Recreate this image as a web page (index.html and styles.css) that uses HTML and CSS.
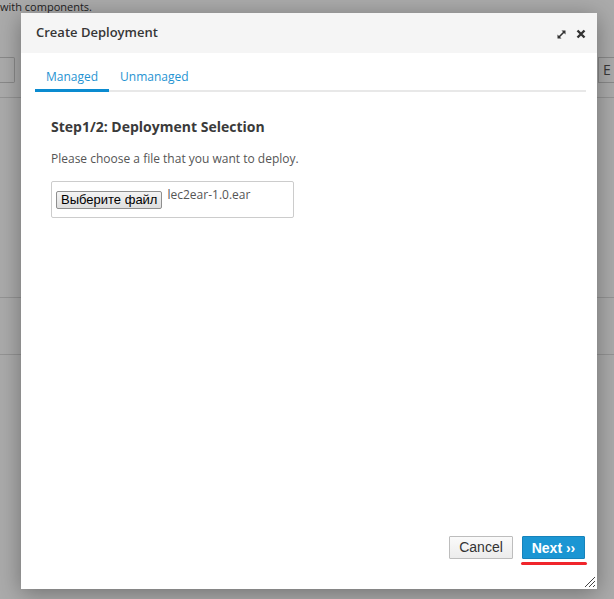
FILE: index.html
```html
<!DOCTYPE html>
<html>
<head>
<meta charset="utf-8">
<title>Create Deployment</title>
<link rel="stylesheet" href="styles.css">
</head>
<body>
<div class="page">
  <p class="page-text">with components.</p>
  <div class="page-toolbar">
    <span class="page-input"></span>
    <span class="page-btn">E</span>
  </div>
  <div class="page-row tall"></div>
  <div class="page-row"></div>
</div>
<div class="overlay"></div>
<div class="modal">
  <div class="modal-header">
    <h4 class="modal-title">Create Deployment</h4>
    <div class="modal-tools">
      <svg class="icon-expand" width="11" height="11" viewBox="0 0 11 11">
        <path d="M2.5 8.5 L8.5 2.5" stroke="#333" stroke-width="1.6" fill="none"/>
        <path d="M5.5 1.5 H9.5 V5.5 Z" fill="#333"/>
        <path d="M1.5 5.5 V9.5 H5.5 Z" fill="#333"/>
      </svg>
      <svg class="icon-close" width="10" height="10" viewBox="0 0 10 10">
        <path d="M1.5 1.5 L8.5 8.5 M8.5 1.5 L1.5 8.5" stroke="#333" stroke-width="2.4" fill="none"/>
      </svg>
    </div>
  </div>
  <div class="modal-body">
    <ul class="tabs">
      <li class="tab active">Managed</li>
      <li class="tab">Unmanaged</li>
    </ul>
    <div class="pane">
      <h3 class="step-title">Step1/2: Deployment Selection</h3>
      <p class="step-text">Please choose a file that you want to deploy.</p>
      <div class="file-box">
        <span class="file-btn">Выберите файл</span>
        <span class="file-name">lec2ear-1.0.ear</span>
      </div>
    </div>
  </div>
  <div class="modal-footer">
    <button class="btn btn-cancel">Cancel</button>
    <div class="next-wrap">
      <button class="btn btn-next">Next ››</button>
      <span class="mark"></span>
    </div>
  </div>
  <svg class="grip" width="12" height="12" viewBox="0 0 12 12">
    <path d="M1 11 L11 1 M5 11 L11 5 M9 11 L11 9" stroke="#444" stroke-width="1" fill="none"/>
  </svg>
</div>
</body>
</html>
```

FILE: styles.css
```css
html, body {
  margin: 0;
  padding: 0;
}
body {
  width: 614px;
  height: 599px;
  overflow: hidden;
  background: #ffffff;
  font-family: "Open Sans", "Liberation Sans", sans-serif;
  position: relative;
}
.page {
  display: flex;
  flex-direction: column;
}
.page-text {
  margin: 0;
  font-size: 11px;
  color: #333;
  height: 5px;
  line-height: 13px;
}
.page-toolbar {
  margin-top: 52px;
  display: flex;
  justify-content: space-between;
  height: 26px;
  border-bottom: 1px solid #ddd;
  padding-bottom: 14px;
}
.page-input {
  width: 14px;
  height: 24px;
  border: 1px solid #ccc;
  border-left: none;
  border-radius: 0 2px 2px 0;
}
.page-btn {
  width: 11px;
  height: 24px;
  border: 1px solid #ccc;
  border-right: none;
  color: #555;
  font-size: 14px;
  line-height: 24px;
  padding-left: 4px;
}
.page-row {
  height: 56px;
  border-bottom: 1px solid #ddd;
}
.page-row.tall {
  height: 199px;
}
.overlay {
  position: absolute;
  inset: 0;
  background: rgba(0, 0, 0, 0.33);
}
.modal {
  position: absolute;
  left: 21px;
  top: 13px;
  width: 576px;
  height: 576px;
  background: #fff;
  box-shadow: 0 4px 22px rgba(0, 0, 0, 0.35);
  display: flex;
  flex-direction: column;
}
.modal-header {
  height: 40px;
  background: #f5f5f5;
  display: flex;
  align-items: center;
  justify-content: space-between;
  padding: 0 11px 0 15px;
}
.modal-title {
  margin: 0;
  font-size: 13px;
  font-weight: 600;
  color: #363636;
  position: relative;
  top: -1px;
}
.modal-tools {
  display: flex;
  align-items: center;
  gap: 9px;
  padding-top: 2px;
}
.modal-body {
  flex: 1;
  padding: 14px 11px 0 14px;
}
.tabs {
  list-style: none;
  margin: 0;
  padding: 0;
  display: flex;
  border-bottom: 2px solid #e8e8e8;
}
.tab {
  font-size: 12px;
  color: #1f93d2;
  padding: 0 11px 0 11px;
  height: 24px;
  line-height: 20px;
  margin-bottom: -2px;
}
.tab.active {
  border-bottom: 3px solid #0a8bd0;
  height: 22px;
}
.pane {
  padding: 0 0 0 16px;
}
.step-title {
  margin: 25px 0 0 0;
  font-size: 14px;
  font-weight: 700;
  color: #3a3a3a;
  line-height: 20px;
}
.step-text {
  margin: 13px 0 0 0;
  font-size: 12px;
  color: #555;
  line-height: 18px;
}
.file-box {
  margin-top: 13px;
  width: 241px;
  height: 35px;
  border: 1px solid #ccc;
  border-radius: 2px;
  display: flex;
  align-items: flex-start;
  padding: 0;
}
.file-btn {
  margin: 9px 0 0 4px;
  height: 16px;
  padding: 0 4px;
  border: 1px solid #8f8f8f;
  border-radius: 2px;
  background: linear-gradient(#f4f4f4, #dedede);
  font-family: "Liberation Sans", Arial, sans-serif;
  font-size: 13px;
  line-height: 16px;
  color: #000;
}
.file-name {
  margin: 5px 0 0 5px;
  font-size: 12px;
  color: #555;
  line-height: 16px;
}
.modal-footer {
  display: flex;
  justify-content: flex-end;
  align-items: flex-start;
  gap: 9px;
  padding: 0 12px 30px 0;
}
.btn {
  height: 23px;
  font-family: "Liberation Sans", Arial, sans-serif;
  font-size: 14px;
  border-radius: 1px;
  padding: 0;
  margin: 0;
  cursor: pointer;
}
.btn-cancel {
  width: 64px;
  background: linear-gradient(#fafafa, #ececec);
  border: 1px solid #bdbdbd;
  color: #333;
}
.next-wrap {
  position: relative;
}
.btn-next {
  width: 63px;
  background: #1b96d3;
  border: 1px solid #1683bb;
  color: #fff;
  font-weight: 700;
}
.mark {
  position: absolute;
  left: -1px;
  right: -2px;
  top: 26px;
  height: 3px;
  border-radius: 2px;
  background: #f0252b;
}
.grip {
  position: absolute;
  right: 1px;
  bottom: 1px;
}
```
